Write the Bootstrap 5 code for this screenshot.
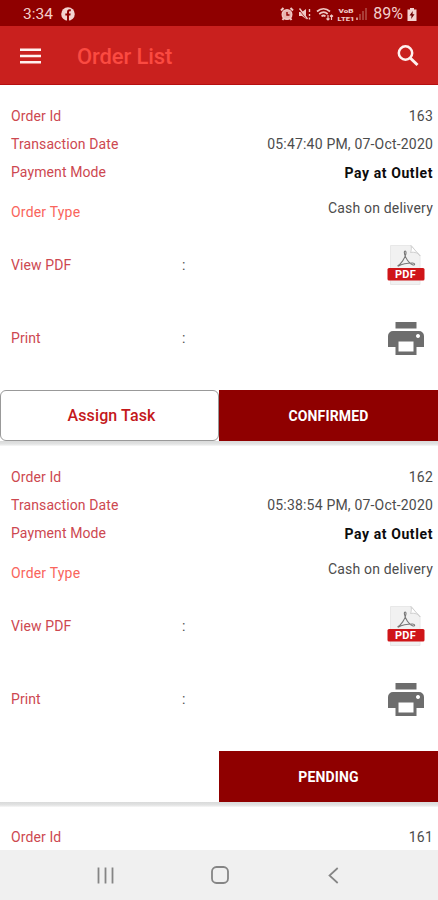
<!DOCTYPE html>
<html lang="en">
<head>
<meta charset="utf-8">
<meta name="viewport" content="width=device-width, initial-scale=1">
<title>Order List</title>
<link href="https://cdn.jsdelivr.net/npm/bootstrap@5.3.0/dist/css/bootstrap.min.css" rel="stylesheet">
<style>
body{font-family:Roboto,"Liberation Sans",sans-serif;font-size:14px;line-height:20px;color:#4c4c4c;background:#fff;letter-spacing:.19px}
svg{display:block;flex:none}
.screen{height:900px}
.status-bar{height:26px;background:#8f0000;color:#f3cfcb;font-size:15.500px;letter-spacing:0;padding:2px 21px 0 23px}
.battery-level{font-size:16px;margin-left:6px}
.app-bar{height:59px;background:#c9201e;border-bottom:1px solid #b60f10;padding:2px 19px 0 20px}
.app-title{font-size:22px;font-weight:500;color:#fb4a41;margin-left:36px;letter-spacing:-.1px;padding-top:2px}
.orders{height:765px}
.order{height:361px;padding-top:17px}
.order-last{padding-top:16px}
.line{height:28px;padding:0 5px 0 11px}
.line-type{height:52px}
.line-pdf{height:54px}
.line-print{height:92px;margin-bottom:6px}
.line-print svg{margin-right:9px}
.key{color:#cd4850;width:171px;letter-spacing:.1px}
.key-type{color:#f9655c;letter-spacing:.2px}
.type-value{padding-bottom:8px}
.pay{font-weight:700;color:#0c0c0c;padding-top:2px;letter-spacing:.6px}
.actions{height:51px}
.foot-shade{height:5px;background:linear-gradient(#d9dada,#e2e3e3 60%,#f8f8f8)}
.act{border-radius:0;font-weight:700;letter-spacing:0;padding:1px 0 0}
.act-assign,.act-assign:hover{background:#fff;color:#c4181b;border:1px solid #999;border-radius:6px;font-size:16px;font-weight:500;letter-spacing:.13px;padding:1px 0 0 4px}
.act-state,.act-state:hover{background:#8f0000;color:#fff;border:0;font-size:14px;letter-spacing:.15px}
.nav-keys{height:50px;background:#f0f0f0;padding:0 99px 0 97px}
.home-key{margin-right:3px}
</style>
</head>
<body>
<div class="screen d-flex flex-column overflow-hidden">
  <div class="status-bar d-flex align-items-center flex-shrink-0">
    <span>3:34</span>
    <svg class="ms-2 me-auto" width="14" height="14" viewBox="0 0 13 13"><circle cx="6.500" cy="6.500" r="6.300" fill="#f3d3d0"/><path d="M5.600 13V8H4V6h1.600V4.700c0-1.700.9-2.500 2.300-2.500h1.200V4H8.200c-.6 0-.8.3-.8.8V6H9l-.3 2H7.400v5z" fill="#8f0000"/></svg>
    <svg width="87" height="16" viewBox="0 -1 87 16" fill="none" stroke="#f0c9c5" stroke-width="1.400">
      <circle cx="7" cy="7.500" r="4.800" fill="#e9b4af"/><path d="M1 3.500 3.500 1M13 3.500 10.500 1M2.500 13l1.500-2M11.500 13 10 11" stroke-width="2"/><path d="M7 5v3h2.500" stroke="#8f0000"/>
      <path d="M19 5h3l4-3v10l-4-3h-3z" fill="#f0c9c5" stroke="none"/><path d="m19 2 8 10" stroke="#8f0000"/><path d="m19.500 1.500 8 10.500M29.500 2v3M29.500 7v2M29.500 10.500v2"/>
      <path d="M37 4.500c4-3.500 9-3.500 13 0M39.200 7c3-2.300 6-2.300 8.500 0M41.500 9.300c1.500-1.200 2.500-1.200 4 0" stroke-width="1.700"/><path d="M48 8v5m-1.500-1.500L48 13l1.500-1.500M51.500 13V8M50 9.500 51.500 8 53 9.500" stroke-width="1.200"/>
      <path d="M80 13V7M83 13V4M86 13V1" stroke="#b5544f"/><path d="M77 13v-2.500"/>
      <g fill="#f0c9c5" stroke="none" font-family="Roboto,sans-serif" font-weight="900" font-size="6"><text x="58.500" y="5.800" textLength="15" lengthAdjust="spacingAndGlyphs">VoB</text><text x="57.500" y="13.600" textLength="17" lengthAdjust="spacingAndGlyphs">LTE1</text></g>
    </svg>
    <span class="battery-level">89%</span>
    <svg class="ms-1" width="10" height="13" viewBox="0 0 10 13"><path d="M3 0h4v1.500h2.500V13h-9V1.500H3z" fill="#f3d3d0"/><path d="M5.800 3 2.500 7.500h2L4.200 11l3.300-4.800h-2z" fill="#6b0000"/></svg>
  </div>
  <header class="app-bar d-flex align-items-center flex-shrink-0">
    <svg width="21" height="16" viewBox="0 0 21 16"><path d="M0 1.700h21M0 8h21M0 14.300h21" stroke="#fff1ef" stroke-width="2.600"/></svg>
    <span class="app-title">Order List</span>
    <svg class="ms-auto" width="22" height="22" viewBox="0 0 22 22" fill="none" stroke="#fff1ef"><circle cx="8.500" cy="8" r="6.700" stroke-width="2.500"/><path d="m13 12.700 7.500 7.300" stroke-width="3"/></svg>
  </header>

  <main class="orders overflow-hidden">
    <section class="order d-flex flex-column">
      <div class="line d-flex align-items-center justify-content-between"><span class="key">Order Id</span><span>163</span></div>
      <div class="line d-flex align-items-center justify-content-between"><span class="key">Transaction Date</span><span>05:47:40 PM, 07-Oct-2020</span></div>
      <div class="line d-flex align-items-center justify-content-between"><span class="key">Payment Mode</span><span class="pay">Pay at Outlet</span></div>
      <div class="line line-type d-flex align-items-center justify-content-between"><span class="key key-type">Order Type</span><span class="type-value">Cash on delivery</span></div>
      <div class="line line-pdf d-flex align-items-center"><span class="key">View PDF</span><span>:</span>
        <svg class="ms-auto me-2" width="38" height="40" viewBox="0 0 38 40"><use href="#pdf"/></svg></div>
      <div class="line line-print d-flex align-items-center"><span class="key">Print</span><span>:</span>
        <svg class="ms-auto" width="36" height="33" viewBox="0 0 36 33"><use href="#printer"/></svg></div>
      <div class="actions row g-0"><button class="btn act act-assign col-6">Assign Task</button><button class="btn act act-state col-6">CONFIRMED</button></div>
      <div class="foot-shade"></div>
    </section>
    <section class="order d-flex flex-column">
      <div class="line d-flex align-items-center justify-content-between"><span class="key">Order Id</span><span>162</span></div>
      <div class="line d-flex align-items-center justify-content-between"><span class="key">Transaction Date</span><span>05:38:54 PM, 07-Oct-2020</span></div>
      <div class="line d-flex align-items-center justify-content-between"><span class="key">Payment Mode</span><span class="pay">Pay at Outlet</span></div>
      <div class="line line-type d-flex align-items-center justify-content-between"><span class="key key-type">Order Type</span><span class="type-value">Cash on delivery</span></div>
      <div class="line line-pdf d-flex align-items-center"><span class="key">View PDF</span><span>:</span>
        <svg class="ms-auto me-2" width="38" height="40" viewBox="0 0 38 40"><use href="#pdf"/></svg></div>
      <div class="line line-print d-flex align-items-center"><span class="key">Print</span><span>:</span>
        <svg class="ms-auto" width="36" height="33" viewBox="0 0 36 33"><use href="#printer"/></svg></div>
      <div class="actions row g-0 justify-content-end"><button class="btn act act-state col-6">PENDING</button></div>
      <div class="foot-shade"></div>
    </section>
    <section class="order order-last">
      <div class="line d-flex align-items-center justify-content-between"><span class="key">Order Id</span><span>161</span></div>
    </section>
  </main>

  <nav class="nav-keys d-flex align-items-center justify-content-between flex-shrink-0">
    <svg width="17" height="17" viewBox="0 0 17 17"><path d="M1.500 .5v16M8.500 .5v16M15.500 .5v16" stroke="#858585" stroke-width="1.800"/></svg>
    <svg class="home-key" width="18" height="18" viewBox="0 0 18 18"><rect x="1" y="1" width="16" height="16" rx="4.500" fill="none" stroke="#858585" stroke-width="1.800"/></svg>
    <svg width="11" height="17" viewBox="0 0 11 17"><path d="M9.700 1 1.500 8.500l8.200 7.500" fill="none" stroke="#858585" stroke-width="1.700"/></svg>
  </nav>
</div>

<svg class="d-none" aria-hidden="true">
  <defs>
    <g id="pdf">
      <path d="M3.500.5h20.500l9 10v29H3.500z" fill="#f1f1f1" stroke="#e8e8e8"/>
      <path d="M24 .5c1 4-.5 7-.5 7 4-1 9 1 9.500 3.500z" fill="#fff" stroke="#cfcfcf"/>
      <path d="M10.500 21c3-1.500 8-8 8.500-13 .2-2.700-2-2.500-1.600 0C18 12.500 22 19 26 20c2.500.4 2-2-.5-2-5 0-11 1.300-14.500 3.200" fill="none" stroke="#777" stroke-width="1.100"/>
      <rect x=".5" y="23" width="37" height="12.500" rx="1.500" fill="#cf1518"/>
      <text x="18.500" y="33" text-anchor="middle" font-family="Roboto,sans-serif" font-weight="700" font-size="11" fill="#fff">PDF</text>
    </g>
    <g id="printer" fill="#6d6d6d">
      <path d="M7.500 0h21v6.500h-21z"/>
      <path fill-rule="evenodd" d="M5 9h26a5 5 0 0 1 5 5v11h-7.500v8h-21v-8H0V14a5 5 0 0 1 5-5zm5.500 10.500v10h15v-10zM30 12a2 2 0 1 0 .01 0z"/>
    </g>
  </defs>
</svg>
<script src="https://cdn.jsdelivr.net/npm/bootstrap@5.3.0/dist/js/bootstrap.bundle.min.js"></script>
</body>
</html>
